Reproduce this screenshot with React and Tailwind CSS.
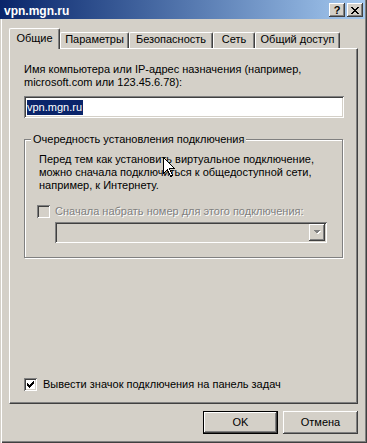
import React from "react";

const raised =
  "shadow-[inset_-1px_-1px_0_#404040,inset_1px_1px_0_#ffffff,inset_-2px_-2px_0_#808080,inset_2px_2px_0_#d4d0c8]";
const sunken =
  "shadow-[inset_1px_1px_0_#808080,inset_-1px_-1px_0_#ffffff,inset_2px_2px_0_#404040,inset_-2px_-2px_0_#d4d0c8]";

function CaptionButton({ children }) {
  return (
    <div className={`w-[16px] h-[14px] bg-[#d4d0c8] flex items-center justify-center ${raised}`}>
      {children}
    </div>
  );
}

function Tab({ label, width, active }) {
  if (active) {
    return (
      <div
        className={`relative z-10 h-[21px] bg-[#d4d0c8] border-l border-t border-white rounded-tl-[2px] rounded-tr-[2px] border-r border-r-[#404040] shadow-[inset_-1px_0_0_#808080] flex justify-center pt-[3px] text-[11px] leading-[13px] text-black`}
        style={{ width }}
      >
        {label}
      </div>
    );
  }
  return (
    <div
      className="h-[16px] mb-[1px] bg-[#d4d0c8] border-l border-t border-white rounded-tl-[2px] rounded-tr-[2px] border-r border-r-[#404040] shadow-[inset_-1px_0_0_#808080] flex justify-center pt-[0px] text-[11px] leading-[13px] text-black"
      style={{ width }}
    >
      {label}
    </div>
  );
}

function CheckBox({ checked, disabled }) {
  return (
    <div
      className={`w-[13px] h-[13px] shrink-0 ${disabled ? "bg-[#d4d0c8]" : "bg-white"} ${sunken} relative`}
    >
      {checked && (
        <svg className="absolute left-[3px] top-[3px]" width="7" height="7" viewBox="0 0 7 7" shapeRendering="crispEdges">
          <polygon points="0,2 2,4 7,-1 7,2 2,7 0,5" fill="#000" />
        </svg>
      )}
    </div>
  );
}

export default function App() {
  return (
    <div className="relative w-[367px] h-[443px] bg-[#d4d0c8] overflow-hidden font-['Liberation_Sans',Arial,sans-serif] text-black shadow-[inset_1px_0_0_#d4d0c8,inset_2px_0_0_#ffffff,inset_-1px_-1px_0_#404040,inset_-2px_-2px_0_#808080]">
      {/* Title bar */}
      <div className="h-[19px] mr-[2px] flex justify-between bg-gradient-to-r from-[#0a246a] to-[#a6caf0]">
        <span className="pl-[4px] mt-[5px] text-[12px] leading-[12px] font-bold text-white">vpn.mgn.ru</span>
        <div className="flex gap-[2px] pr-[2px] mt-[3px]">
          <CaptionButton>
            <span className="text-[11px] leading-[11px] font-bold">?</span>
          </CaptionButton>
          <CaptionButton>
            <svg width="8" height="7" viewBox="0 0 8 7" shapeRendering="crispEdges">
              <path d="M0 0h2l2 2.5L6 0h2L5 3.5 8 7H6L4 4.5 2 7H0l3-3.5z" fill="#000" />
            </svg>
          </CaptionButton>
        </div>
      </div>

      {/* Tabs */}
      <div className="mt-[9px] ml-[9px] h-[21px] flex items-end">
        <Tab label="Общие" width={51} active />
        <Tab label="Параметры" width={69} />
        <Tab label="Безопасность" width={84} />
        <Tab label="Сеть" width={42} />
        <Tab label="Общий доступ" width={85} />
      </div>

      {/* Panel */}
      <div className="-mt-[1px] ml-[9px] w-[349px] h-[356px] border-l border-t border-white border-r border-b border-r-[#404040] border-b-[#404040] shadow-[inset_-1px_-1px_0_#808080] flex flex-col pl-[14px] pt-[14px] pb-[12px] text-[11px] leading-[13px]">
        <div>
          Имя компьютера или IP-адрес назначения (например,
          <br />
          microsoft.com или 123.45.6.78):
        </div>
        <div className={`mt-[7px] w-[320px] h-[22px] bg-white ${sunken} flex items-center pl-[3px]`}>
          <span className="bg-[#0a246a] text-white leading-[15px] pr-[1px]">vpn.mgn.ru</span>
        </div>

        {/* Group box */}
        <div className="relative mt-[21px] w-[319px] h-[119px] border border-[#808080] shadow-[inset_1px_1px_0_#ffffff,1px_1px_0_#ffffff] pl-[14px] pt-[13px] flex flex-col">
          <span className="absolute left-[6px] -top-[7px] px-[2px] bg-[#d4d0c8] leading-[13px]">
            Очередность установления подключения
          </span>
          <div>
            Перед тем как установить виртуальное подключение,
            <br />
            можно сначала подключиться к общедоступной сети,
            <br />
            например, к Интернету.
          </div>
          <div className="mt-[13px] -ml-[2px] flex items-start gap-[5px]">
            <CheckBox disabled />
            <span className="text-[#808080] [text-shadow:1px_1px_0_#ffffff]">
              Сначала набрать номер для этого подключения:
            </span>
          </div>
          <div className={`mt-[4px] ml-[16px] w-[272px] h-[21px] bg-[#d4d0c8] ${sunken} flex justify-end p-[2px]`}>
            <div className={`w-[16px] h-[17px] bg-[#d4d0c8] ${raised} flex items-center justify-center`}>
              <svg width="8" height="5" viewBox="0 0 8 5" shapeRendering="crispEdges">
                <polygon points="1,1 8,1 4.5,4.5" fill="#ffffff" />
                <polygon points="0,0 7,0 3.5,3.5" fill="#808080" />
              </svg>
            </div>
          </div>
        </div>

        <div className="mt-auto flex items-start gap-[6px]">
          <CheckBox checked />
          <span>Вывести значок подключения на панель задач</span>
        </div>
      </div>

      {/* Buttons */}
      <div className="mt-[7px] ml-[9px] w-[349px] flex justify-end gap-[5px] text-[11px] leading-[13px]">
        <div className="w-[75px] h-[23px] border border-black">
          <div className={`w-full h-full flex items-center justify-center ${raised}`}>OK</div>
        </div>
        <div className={`w-[75px] h-[23px] flex items-center justify-center ${raised}`}>Отмена</div>
      </div>

      {/* Mouse cursor */}
      <svg
        className="absolute left-[163px] top-[157px]"
        width="13"
        height="21"
        viewBox="0 0 13 21"
        shapeRendering="crispEdges"
      >
        <path
          d="M0.5 0.5 L0.5 16.5 L4.5 12.5 L7.5 19.5 L9.5 18.5 L6.5 11.5 L11.5 11.5 Z"
          fill="#ffffff"
          stroke="#000000"
          strokeWidth="1"
          strokeLinejoin="miter"
        />
      </svg>
    </div>
  );
}
